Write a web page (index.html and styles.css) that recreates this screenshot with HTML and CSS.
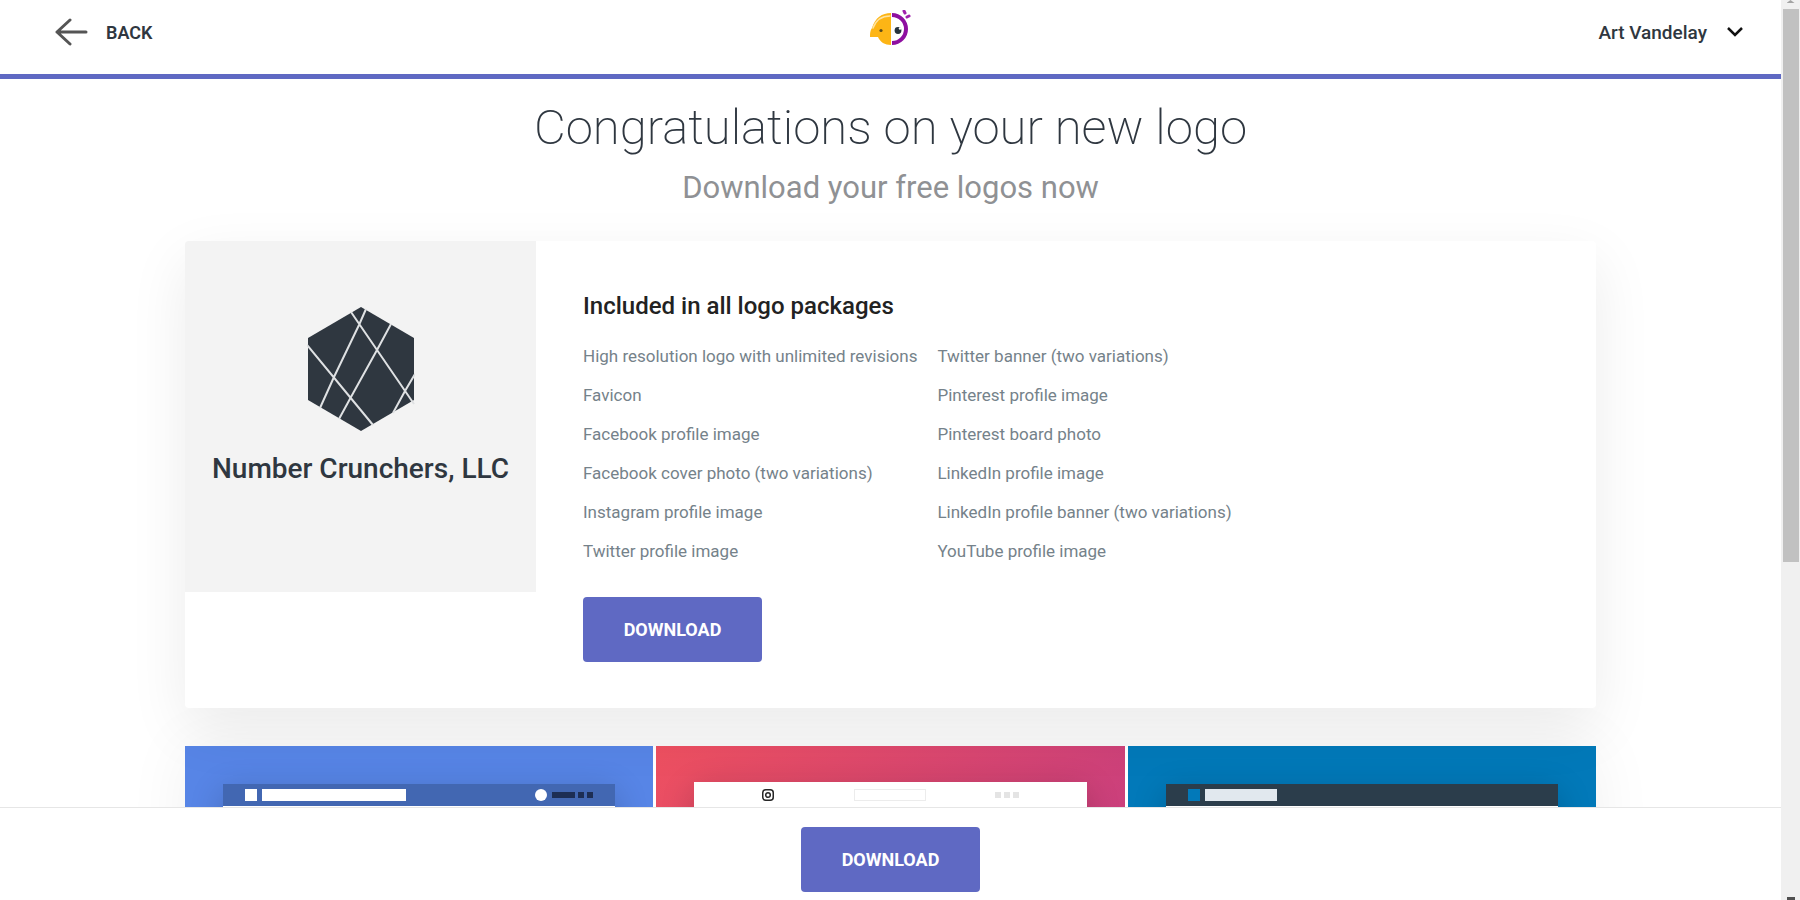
FILE: index.html
```html
<!DOCTYPE html>
<html lang="en">
<head>
  <meta charset="UTF-8">
  <meta name="viewport" content="width=device-width, initial-scale=1.0">
  <title>Congratulations on your new logo</title>
  <link rel="stylesheet" href="styles.css">
</head>
<body>
  <div class="page">
    <div class="content">
      <header class="header">
        <a class="back" href="#">
          <svg class="back__icon" width="34" height="28" viewBox="0 0 34 28" fill="none" stroke="#555" stroke-width="3" stroke-linecap="round" stroke-linejoin="round">
            <path d="M32 14H3M16 2L3 14L16 26"/>
          </svg>
          BACK
        </a>
        <a class="brand" href="#" aria-label="Home">
          <svg width="42" height="38" viewBox="0 0 42 38">
            <path d="M21 3v32c-6 0-11-3-13-8H0c0-4 0-6 2-9C5 8 12 3 21 3z" fill="#fdb515"/>
            <path d="M3 18C6 10 12 6 20 6" fill="none" stroke="#fee3a0" stroke-width="1.5" stroke-linecap="round"/>
            <circle cx="11" cy="20.500" r="1.600" fill="#5b4a1c"/>
            <path d="M22 5a14 14 0 0 1 0 28" fill="#fff" stroke="#8e0fa0" stroke-width="4"/>
            <circle cx="28" cy="20.500" r="3.400" fill="#26333d"/>
            <circle cx="30" cy="18.500" r="1.200" fill="#fff"/>
            <path d="M34 1l1 2M37 7l2-1" stroke="#a020ac" stroke-width="3" stroke-linecap="round"/>
          </svg>
        </a>
        <button class="account" type="button">
          Art Vandelay
          <svg width="16" height="10" viewBox="0 0 16 10" fill="none" stroke="#111" stroke-width="2.500">
            <path d="M1 1l7 7l7-7"/>
          </svg>
        </button>
      </header>

      <main class="main">
        <h1 class="title">Congratulations on your new logo</h1>
        <p class="subtitle">Download your free logos now</p>

        <section class="card">
          <div class="logo">
            <svg class="logo__mark" width="108" height="125" viewBox="0 0 108 125">
              <path d="M54 0l53 31v62l-53 31L1 93V31z" fill="#2f3740"/>
              <path d="M44 5L107 97M59 2L52 18L27 70L13 101M84 17L70 43L44 90L32 112M0 38L66 118M108 67L98 84L86 106" fill="none" stroke="#dfe1e3" stroke-width="2"/>
            </svg>
            <div class="logo__name">Number Crunchers, LLC</div>
          </div>
          <div class="package">
            <h2 class="package__title">Included in all logo packages</h2>
            <div class="package__lists">
              <ul class="list">
                <li>High resolution logo with unlimited revisions</li>
                <li>Favicon</li>
                <li>Facebook profile image</li>
                <li>Facebook cover photo (two variations)</li>
                <li>Instagram profile image</li>
                <li>Twitter profile image</li>
              </ul>
              <ul class="list">
                <li>Twitter banner (two variations)</li>
                <li>Pinterest profile image</li>
                <li>Pinterest board photo</li>
                <li>LinkedIn profile image</li>
                <li>LinkedIn profile banner (two variations)</li>
                <li>YouTube profile image</li>
              </ul>
            </div>
            <button class="button" type="button">DOWNLOAD</button>
          </div>
        </section>

        <section class="tiles">
          <div class="tile tile--facebook">
            <div class="mock">
              <div class="mock__bar">
                <span class="mock__square"></span>
                <span class="mock__field"></span>
                <span class="mock__avatar"></span>
                <span class="mock__link"></span>
                <span class="mock__dot"></span>
                <span class="mock__dot"></span>
              </div>
            </div>
          </div>
          <div class="tile tile--instagram">
            <div class="mock">
              <div class="mock__bar">
                <svg width="12" height="12" viewBox="0 0 12 12" fill="none" stroke="#262626" stroke-width="1.5">
                  <rect x="0.75" y="0.75" width="10.5" height="10.5" rx="3"/>
                  <circle cx="6" cy="6" r="2.3"/>
                </svg>
                <span class="mock__field"></span>
                <span class="mock__dots">
                  <span class="mock__dot"></span>
                  <span class="mock__dot"></span>
                  <span class="mock__dot"></span>
                </span>
              </div>
            </div>
          </div>
          <div class="tile tile--linkedin">
            <div class="mock">
              <div class="mock__bar">
                <span class="mock__square"></span>
                <span class="mock__field"></span>
              </div>
            </div>
          </div>
        </section>
      </main>

      <footer class="footer">
        <button class="button" type="button">DOWNLOAD</button>
      </footer>
    </div>

    <div class="scrollbar">
      <span class="scrollbar__up"></span>
      <div class="scrollbar__thumb"></div>
      <span class="scrollbar__down"></span>
    </div>
  </div>
</body>
</html>
```
FILE: styles.css
```css
* {
  box-sizing: border-box;
}

body {
  margin: 0;
  font-family: Roboto, "Liberation Sans", sans-serif;
  color: #2f3740;
  background: #fff;
}

h1, h2, p, ul {
  margin: 0;
  padding: 0;
}

button {
  font-family: inherit;
  border: 0;
  cursor: pointer;
}

.page {
  display: flex;
  height: 100vh;
  overflow: hidden;
}

.content {
  flex: 1;
  min-width: 0;
  display: flex;
  flex-direction: column;
}

/* header */
.header {
  flex: none;
  display: grid;
  grid-template-columns: 1fr auto 1fr;
  align-items: center;
  height: 79px;
  padding: 0 38px 10px;
  border-bottom: 5px solid #5f69c3;
}

.back {
  display: flex;
  align-items: center;
  gap: 18px;
  padding-left: 16px;
  font-size: 18px;
  font-weight: 600;
  color: #2f3740;
  text-decoration: none;
}

.brand {
  display: flex;
  padding-bottom: 6px;
}

.account {
  justify-self: end;
  display: flex;
  align-items: center;
  gap: 20px;
  padding: 0;
  font-size: 19px;
  font-weight: 500;
  color: #2f3740;
  background: none;
}

/* main */
.main {
  flex: 1;
  min-height: 0;
  overflow: hidden;
  padding: 16px 24px 0;
}

.title {
  font-size: 49px;
  line-height: 66px;
  font-weight: 200;
  text-align: center;
}

.subtitle {
  margin-bottom: 26px;
  font-size: 31px;
  line-height: 54px;
  text-align: center;
  color: #8f9194;
}

.card {
  position: relative;
  z-index: 1;
  display: flex;
  align-items: flex-start;
  max-width: 1411px;
  margin: 0 auto 38px;
  background: #fff;
  border-radius: 4px;
  box-shadow: 0 20px 60px rgba(0, 0, 0, .08);
}

.logo {
  flex: none;
  display: flex;
  flex-direction: column;
  align-items: center;
  width: 351px;
  height: 351px;
  padding-top: 66px;
  background: #f3f3f3;
  border-radius: 4px 0 0 0;
}

.logo__name {
  margin-top: 16px;
  font-size: 28px;
  line-height: 42px;
  font-weight: 500;
  white-space: nowrap;
}

.package {
  padding: 46px 24px 46px 47px;
}

.package__title {
  margin-bottom: 12px;
  font-size: 24px;
  line-height: 38px;
  font-weight: 500;
  color: #222;
}

.package__lists {
  display: flex;
  gap: 20px;
  margin-bottom: 26px;
}

.list {
  list-style: none;
  font-size: 17px;
  line-height: 39px;
  color: #75828a;
}

.button {
  width: 179px;
  height: 65px;
  font-size: 18px;
  font-weight: 700;
  color: #fff;
  background: #5f69c3;
  border-radius: 4px;
}

/* social previews */
.tiles {
  display: grid;
  grid-template-columns: repeat(3, 1fr);
  gap: 3px;
  max-width: 1411px;
  margin: 0 auto;
  box-shadow: 0 0 60px rgba(0, 0, 0, .06);
}

.tile {
  height: 320px;
  padding: 38px 38px 0;
}

.tile--facebook {
  background: #5785e6;
}

.tile--instagram {
  padding-top: 36px;
  background: linear-gradient(135deg, #ee5060, #c93f7d 70%, #b83a80);
}

.tile--linkedin {
  background: #0279b9;
}

.mock {
  height: 260px;
  background: #fff;
  box-shadow: 0 8px 32px rgba(0, 0, 0, .2);
}

.mock__bar {
  display: flex;
  align-items: center;
  height: 22px;
  padding: 0 22px;
}

.mock__square {
  width: 12px;
  height: 12px;
  background: #fff;
}

.mock__field {
  width: 72px;
  height: 12px;
  margin-left: 5px;
}

.mock__dot {
  width: 6px;
  height: 6px;
}

.tile--facebook .mock__bar {
  background: #4267b2;
}

.tile--facebook .mock__field {
  width: 144px;
  background: #fff;
}

.mock__avatar {
  width: 12px;
  height: 12px;
  margin-left: auto;
  border-radius: 50%;
  background: #fff;
}

.mock__link {
  width: 23px;
  height: 6px;
  margin-left: 5px;
  background: #1d2e54;
}

.tile--facebook .mock__dot {
  margin-left: 3px;
  background: #1d2e54;
}

.tile--instagram .mock__bar {
  display: grid;
  grid-template-columns: 1fr auto 1fr;
  height: 25px;
  padding: 0 68px;
}

.tile--instagram .mock__field {
  margin: 0;
  border: 1px solid #ececec;
}

.mock__dots {
  justify-self: end;
  display: flex;
  gap: 3px;
}

.tile--instagram .mock__dot {
  background: #e4e4e4;
}

.tile--linkedin .mock__bar {
  background: #2b3d4b;
}

.tile--linkedin .mock__square {
  background: #0279b9;
}

.tile--linkedin .mock__field {
  background: #e1e8ee;
}

/* footer */
.footer {
  flex: none;
  display: flex;
  justify-content: center;
  align-items: center;
  height: 93px;
  padding-top: 10px;
  border-top: 1px solid #e6e6e6;
  background: #fff;
}

/* scrollbar */
.scrollbar {
  flex: none;
  display: flex;
  flex-direction: column;
  align-items: center;
  width: 19px;
  background: #f0f0f0;
}

.scrollbar__up {
  width: 8px;
  height: 3px;
  margin-bottom: 6px;
  background: #a3a3a3;
  clip-path: polygon(50% 0, 100% 100%, 0 100%);
}

.scrollbar__thumb {
  width: 16px;
  height: 553px;
  background: #c1c1c1;
}

.scrollbar__down {
  width: 8px;
  height: 3px;
  margin-top: auto;
  background: #505050;
}
```
